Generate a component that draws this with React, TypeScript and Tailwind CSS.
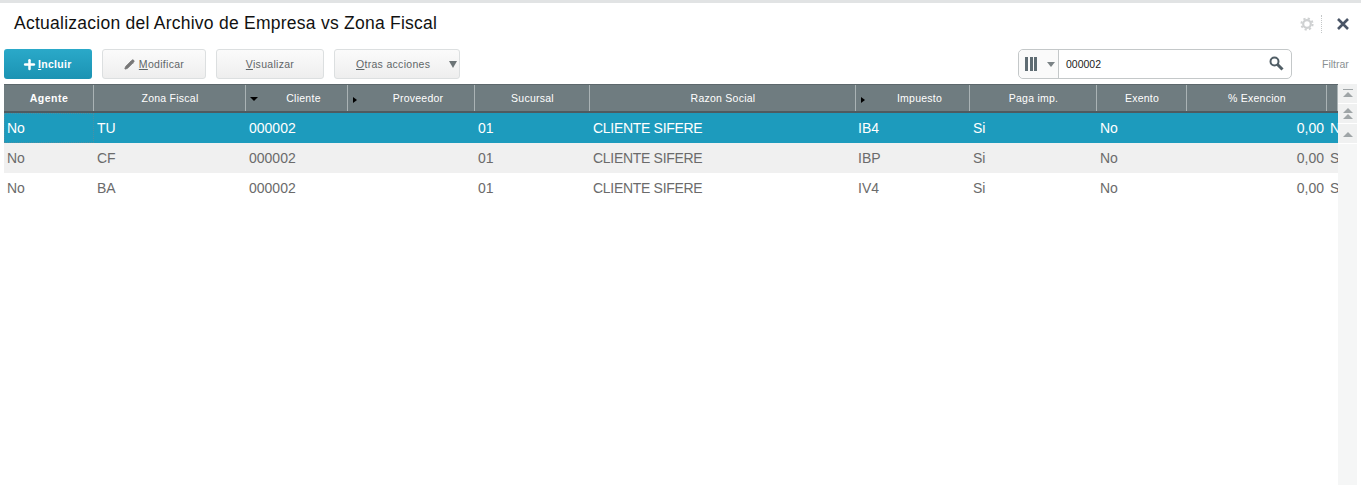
import React from 'react';
import { Plus, Pencil } from 'lucide-react';

interface Column {
  label: string;
  width: string;
  arrow?: 'down' | 'right';
  bold?: boolean;
}

const columns: Column[] = [
  { label: 'Agente', width: 'w-[90px]', bold: true },
  { label: 'Zona Fiscal', width: 'w-[152px]' },
  { label: 'Cliente', width: 'w-[102px]', arrow: 'down' },
  { label: 'Proveedor', width: 'w-[127px]', arrow: 'right' },
  { label: 'Sucursal', width: 'w-[115px]' },
  { label: 'Razon Social', width: 'w-[266px]' },
  { label: 'Impuesto', width: 'w-[114px]', arrow: 'right' },
  { label: 'Paga imp.', width: 'w-[127px]' },
  { label: 'Exento', width: 'w-[90px]' },
  { label: '% Exencion', width: 'w-[140px]' },
  { label: '', width: 'w-[11px]' },
];

const rows = [
  ['No', 'TU', '000002', '', '01', 'CLIENTE SIFERE', 'IB4', 'Si', 'No', '0,00', 'N'],
  ['No', 'CF', '000002', '', '01', 'CLIENTE SIFERE', 'IBP', 'Si', 'No', '0,00', 'S'],
  ['No', 'BA', '000002', '', '01', 'CLIENTE SIFERE', 'IV4', 'Si', 'No', '0,00', 'S'],
];

const ScrollArrow = ({ double, bar }: { double?: boolean; bar?: boolean }) => (
  <div className="h-[20px] flex items-center justify-center bg-[#f0f1f1] border-b border-white">
    <svg width="12" height="14" viewBox="0 0 12 14" className="text-[#9fa5a7]" fill="currentColor">
      {bar && <rect x="1" y="2" width="10" height="1" />}
      {double ? (
        <>
          <path d="M6 1l5 5H1z" />
          <path d="M6 7l5 5H1z" />
        </>
      ) : (
        <path d="M6 5l5 5H1z" />
      )}
    </svg>
  </div>
);

const ActionButton = ({ className, children }: { className: string; children: React.ReactNode }) => (
  <button className={`${className} h-[30px] pt-[1px] flex items-center rounded-[3px] border border-[#dcdfe0] bg-gradient-to-b from-[#fbfbfb] to-[#eeeeee] text-[10.5px] tracking-[0.3px] text-[#5f6668]`}>
    {children}
  </button>
);

export default function App() {
  return (
    <div className="h-[485px] w-[1361px] overflow-hidden bg-white font-['Liberation_Sans',Arial,sans-serif]">
      <div className="h-[3px] bg-[#e1e3e4]" />

      <header className="h-[41px] flex items-center pl-[14px] pr-[11px]">
        <h1 className="text-[17.5px] leading-none tracking-[0.25px] text-[#111]">Actualizacion del Archivo de Empresa vs Zona Fiscal</h1>
        <div className="ml-auto flex items-center">
          <svg width="14" height="14" viewBox="0 0 14 14" fill="none" stroke="#cfd1d2">
            <circle cx="7" cy="7" r="3.8" strokeWidth="2.2" />
            <circle cx="7" cy="7" r="5.6" strokeWidth="2" strokeDasharray="2.2 2.2" />
          </svg>
          <div className="ml-[7px] mr-[14px] h-[18px] border-l border-dotted border-[#c4c7c8]" />
          <svg width="14" height="14" viewBox="0 0 14 14" fill="none" stroke="#4a5566" strokeWidth="2.6">
            <path d="M2 2L12 12M12 2L2 12" />
          </svg>
        </div>
      </header>

      <div className="h-[40px] pt-[5px] pl-[4px] flex items-start">
        <button className="w-[88px] h-[30px] pt-[1px] pl-[18px] flex items-center gap-[1px] rounded-[3px] bg-gradient-to-b from-[#2aa9c9] to-[#1b93b3] text-[10.5px] font-bold tracking-[0.3px] text-white">
          <Plus className="w-[15px] h-[15px]" strokeWidth={4} />
          <span><u>I</u>ncluir</span>
        </button>
        <div className="ml-[10px]">
          <ActionButton className="w-[104px] justify-center">
            <Pencil className="w-[11px] h-[11px] mr-[4px] fill-[#777] text-[#777]" />
            <span><u>M</u>odificar</span>
          </ActionButton>
        </div>
        <div className="ml-[10px]">
          <ActionButton className="w-[108px] justify-center">
            <span><u>V</u>isualizar</span>
          </ActionButton>
        </div>
        <div className="ml-[10px]">
          <ActionButton className="w-[126px] justify-start pl-[21px]">
            <span className="mr-[19px]"><u>O</u>tras acciones</span>
            <span className="w-0 h-0 border-x-[4px] border-x-transparent border-t-[7px] border-t-[#6c7476]" />
          </ActionButton>
        </div>

        <div className="ml-[558px] w-[274px] h-[30px] flex rounded-[5px] border border-[#c4c8c9]">
          <div className="w-[40px] flex items-center pl-[6px] gap-[10px] border-r border-[#c4c8c9] bg-[#fafafa] rounded-l-[5px]">
            <div className="flex gap-[1.5px]">
              <span className="w-[3px] h-[14px] bg-[#5f6c73]" />
              <span className="w-[3px] h-[14px] bg-[#5f6c73]" />
              <span className="w-[3px] h-[14px] bg-[#5f6c73]" />
            </div>
            <span className="w-0 h-0 border-x-[4px] border-x-transparent border-t-[5px] border-t-[#7b8386]" />
          </div>
          <div className="flex-1 flex items-center pl-[7px] pr-[7px] pt-[1px] text-[10.5px] text-[#222]">
            <span>000002</span>
            <svg width="15" height="15" viewBox="0 0 15 15" fill="none" stroke="#515e66" className="ml-auto -mt-[2px]">
              <circle cx="5.5" cy="5.5" r="4" strokeWidth="2" />
              <path d="M8.5 8.5L13.5 13.5" strokeWidth="3" />
            </svg>
          </div>
        </div>
        <span className="ml-[30px] mt-[8px] text-[10.5px] text-[#8a9092]">Filtrar</span>
      </div>

      <div className="pl-[4px] flex items-start">
        <div className="w-[1334px] overflow-hidden">
          <div className="flex h-[29px] bg-[#6f7c80] border-t border-[#5d686c] border-b-2 border-b-[#4f5b60]">
            {columns.map((col, i) => (
              <div
                key={i}
                className={`${col.width} shrink-0 relative flex items-center justify-center pt-[1px] border-r border-[#aab3b5] text-[10.5px] text-white ${col.arrow ? 'pl-[14px]' : 'pl-[1px]'} ${col.bold ? 'font-bold tracking-[0.5px]' : 'tracking-[0.25px]'}`}
              >
                {col.arrow === 'down' && (
                  <span className="absolute left-[4px] top-[12px] w-0 h-0 border-x-[4px] border-x-transparent border-t-[4px] border-t-black" />
                )}
                {col.arrow === 'right' && (
                  <span className="absolute left-[5px] top-[12px] w-0 h-0 border-y-[3px] border-y-transparent border-l-[4px] border-l-black" />
                )}
                {col.label}
              </div>
            ))}
          </div>
          {rows.map((row, r) => (
            <div
              key={r}
              className={`flex h-[30px] text-[14px] ${r === 0 ? 'bg-[#1d9bbd] text-white' : r === 1 ? 'bg-[#f0f0f0] text-[#6b6b6b]' : 'bg-white text-[#6b6b6b]'}`}
            >
              {columns.map((col, i) => (
                <div
                  key={i}
                  className={`${col.width} shrink-0 flex items-center overflow-hidden whitespace-nowrap ${i === 9 ? 'justify-end pr-[3px]' : i === 6 ? 'pl-[2px]' : 'pl-[3px]'} ${i === 5 ? 'tracking-[-0.3px]' : ''} ${r === 0 && i === 0 ? 'outline-1 -outline-offset-1 outline-dotted outline-[#4d8fa3]' : ''}`}
                >
                  {row[i]}
                </div>
              ))}
            </div>
          ))}
        </div>
        <div className="w-[19px] h-[401px] bg-[#f5f6f6]">
          <ScrollArrow bar />
          <ScrollArrow double />
          <ScrollArrow />
        </div>
      </div>
    </div>
  );
}
